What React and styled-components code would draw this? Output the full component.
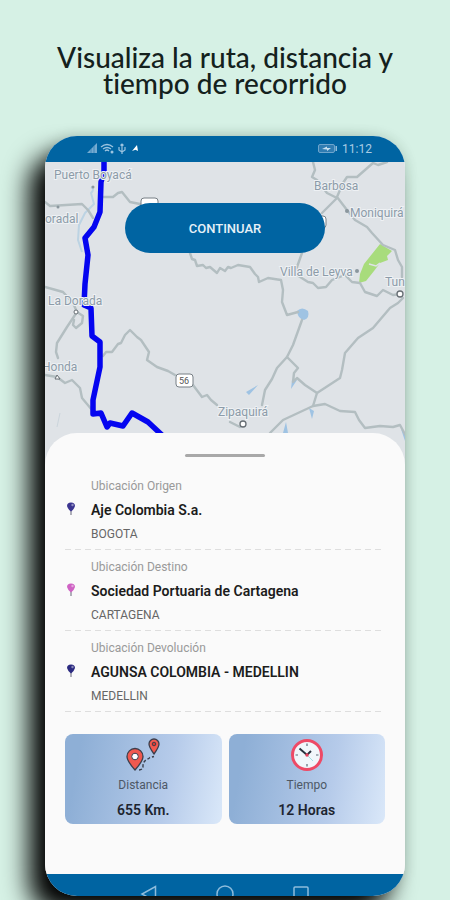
import styled, { createGlobalStyle } from 'styled-components';

const locations = [
  { label: 'Ubicación Origen', name: 'Aje Colombia S.a.', city: 'BOGOTA', color: '#3b3590' },
  {
    label: 'Ubicación Destino',
    name: 'Sociedad Portuaria de Cartagena',
    city: 'CARTAGENA',
    color: '#cf62c4',
  },
  {
    label: 'Ubicación Devolución',
    name: 'AGUNSA COLOMBIA - MEDELLIN',
    city: 'MEDELLIN',
    color: '#2b2a80',
  },
];

const roads = [
  '45,202 50,206 82,204 88,210 93,218',
  '103,197 113,197 118,193 122,192 130,202 140,204',
  '190,253 192,259 195,260 197,266 203,265 206,268 210,267 217,273 220,268 225,271 228,267 231,268 238,265 250,267 255,274 258,277 259,282 268,278 281,280 283,290 282,302 287,315 298,312',
  '45,287 63,292 73,303 77,312 83,316 82,323 76,328 73,325 74,320',
  '77,312 67,327 57,343 56,352 58,358',
  '45,375 57,377 65,383 72,380 80,388 82,398 92,410',
  '103,356 106,352 112,352 118,344 121,343 125,335 130,330 137,337 141,340 145,346 149,352 147,360 157,367 168,371 175,375',
  '193,385 202,397 207,395 211,400 217,405',
  '230,422 240,427',
  '313,162 315,170 312,177 317,180 327,193 337,198 322,213',
  '387,162 378,165 373,163 365,170 357,177 347,177 343,183 337,197 347,210 355,220 367,227 372,233 383,245 395,250 398,260 402,267 402,277',
  '302,253 297,267 297,275 308,282 313,283 318,288 326,287 332,280 345,275 352,282 360,283 365,292 377,296 383,290 393,295 400,294',
  '403,298 398,303 390,308 373,328 358,338 345,353 342,370 340,378 317,393 305,385 297,378 293,382 294,373 298,368 287,357 293,345 302,320',
  '287,357 277,368 272,379 265,390 262,405',
  '317,393 313,406 283,420 270,433',
  '313,406 325,404 340,411 355,412 359,420 365,428 380,426 393,427 400,425 406,436',
];

const places = [
  { name: 'Puerto Boyacá', x: 54, y: 179 },
  { name: 'oradal', x: 45, y: 223 },
  { name: 'La Dorada', x: 48, y: 305 },
  { name: 'Honda', x: 42, y: 371 },
  { name: 'Barbosa', x: 314, y: 190 },
  { name: 'Moniquirá', x: 350, y: 217 },
  { name: 'Villa de Leyva', x: 280, y: 276 },
  { name: 'Tun', x: 385, y: 286 },
  { name: 'Zipaquirá', x: 218, y: 416 },
];

function SignalIcons() {
  return (
    <svg width="52" height="12" viewBox="0 0 52 12" fill="none" stroke="#9cc4e0">
      <path d="M0 10 L10 0 V10 Z" fill="#75abd1" stroke="none" />
      <path d="M4 6 V10 M7 3 V10" stroke="#3f86ba" strokeWidth="1" />
      <path d="M14 4 Q20 -1 26 4 M16 6 Q20 3 24 6 M18 8 Q20 6 22 8" strokeWidth="1.3" />
      <circle cx="25" cy="9" r="1.5" fill="#9cc4e0" stroke="none" />
      <path d="M35 1 V11 M32 4 V7 L35 9 M38 4 V7 L35 9 M33.5 2.5 L35 1 L36.5 2.5" strokeWidth="1.2" />
      <path d="M45 8 L50 2 L51 8 L48.5 6.8 Z" fill="#fff" stroke="none" />
    </svg>
  );
}

function BatteryIcon() {
  return (
    <svg width="20" height="10" viewBox="0 0 20 10">
      <rect x="0.5" y="0.5" width="16" height="8" rx="1.5" fill="#2f7cb2" stroke="#6da5cc" />
      <path d="M4 5 L9 2.5 V4 H13 L9 7 V5.5 Z" fill="#c7dfef" />
      <rect x="17.5" y="2" width="1.5" height="5" fill="#8fbcdb" />
    </svg>
  );
}

function RouteMap() {
  return (
    <MapDrawing viewBox="45 162 360 303" preserveAspectRatio="xMidYMin slice">
      <rect x="45" y="162" width="360" height="303" fill="#dfe3e7" />
      <g fill="none" stroke="#bcd3e3" strokeWidth="2" strokeLinejoin="round">
        <path d="M91 187 Q95 189 91 193 L94 204 L85 213 L79 225 L78 240 L82 252" />
        <path d="M60 413 L57 427" stroke="#cbd5dc" strokeWidth="1" />
      </g>
      <g fill="#9fc3e3">
        <path d="M297 311 Q302 306 308 311 Q310 318 304 320 Q298 319 297 311 Z" />
        <path d="M246 392 L258 385 L249 395 Z M291 389 L292 380 L297 380 Z M283 433 L286 422 L288 433 Z M309 408 L314 411 L312 419 Z M401 429 L406 434 L406 444 Z" />
      </g>
      <path
        d="M380 244 L392 251 L387 256 L388 260 L380 263 L374 271 L366 281 L359 283 L360 274 L364 264 Z"
        fill="#a8dc7c"
      />
      <path d="M369 264 L376 266 L380 263" stroke="#dfe3e7" strokeWidth="1.5" fill="none" />
      <g fill="none" stroke="#b3bec1" strokeWidth="2.4" strokeLinejoin="round" strokeLinecap="round">
        {roads.map((points) => (
          <polyline key={points} points={points} />
        ))}
      </g>
      <g fill="#fff" stroke="#777f85">
        <rect x="141" y="198" width="17" height="12" rx="3" />
        <rect x="176" y="374" width="17" height="13" rx="3" />
        <rect x="318" y="216" width="8" height="12" rx="3" />
      </g>
      <ShieldText x="184" y="384" textAnchor="middle">
        56
      </ShieldText>
      <g fill="#fff" stroke="#666d73" strokeWidth="1.3">
        <circle cx="243" cy="424" r="3" />
        <circle cx="400" cy="294" r="3" />
        <circle cx="76" cy="312" r="2" strokeWidth="1" />
        <path d="M55 379 L57 375 L60 379 Z" strokeWidth="1" />
      </g>
      <g fill="#8b979e">
        <circle cx="347" cy="211" r="2" />
        <circle cx="357" cy="271" r="2" />
        <circle cx="93" cy="187" r="1.5" />
        <circle cx="58" cy="207" r="1.5" />
      </g>
      <polyline
        points="104,160 104,172 101,182 100,212 94,227 85,238 88,255 85,284 84,305 91,308 92,336 100,342 100,367 93,400 93,414 101,413 107,427 110,423 123,426 132,413 148,422 163,436"
        fill="none"
        stroke="#0505f0"
        strokeWidth="5.5"
        strokeLinejoin="round"
      />
      {places.map((place) => (
        <PlaceName key={place.name} x={place.x} y={place.y}>
          {place.name}
        </PlaceName>
      ))}
    </MapDrawing>
  );
}

function PinIcon({ color }) {
  return (
    <svg width="12" height="16" viewBox="0 0 12 16">
      <path d="M6 6 V13" stroke="#8f8f9d" strokeWidth="1.4" />
      <path d="M2 4 Q2 0.5 6 0.5 Q10 0.5 10 4 Q9 7.5 6 9.5 Q3 7.5 2 4 Z" fill={color} />
      <circle cx="7.5" cy="3" r="1.2" fill="#fff" opacity="0.45" />
    </svg>
  );
}

function DistanceIcon() {
  return (
    <svg width="36" height="34" viewBox="0 0 36 34">
      <g fill="#f0594f" stroke="#3b3f4c" strokeWidth="1.3" strokeLinejoin="round">
        <path d="M10 32 Q2 23 2 18.5 A8 8 0 0 1 18 18.5 Q18 23 10 32 Z" />
        <path d="M29 16 Q24 9 24 6 A5 5 0 0 1 34 6 Q34 9 29 16 Z" />
      </g>
      <circle cx="10" cy="18.5" r="3.3" fill="#fff" stroke="#3b3f4c" />
      <circle cx="29" cy="6" r="1.8" fill="#d9372f" stroke="#3b3f4c" />
      <path
        d="M14 32 Q18 32 18 28 Q18 24 21 22 Q23 21 25 19.5 L29 18.5"
        fill="none"
        stroke="#3b3f4c"
        strokeWidth="1.4"
        strokeDasharray="3 2"
      />
    </svg>
  );
}

function ClockIcon() {
  return (
    <svg width="34" height="34" viewBox="0 0 34 34">
      <circle cx="17" cy="17" r="14.5" fill="#f1f7fb" stroke="#ee4a66" strokeWidth="3" />
      <path
        d="M17 5.5 V8 M17 26 V28.5 M5.5 17 H8 M26 17 H28.5"
        stroke="#5c6b78"
        strokeWidth="1.2"
      />
      <path d="M17 17 L23 23" stroke="#9de0e4" strokeWidth="1" />
      <path d="M9.5 10.5 L17 17 L21 13" fill="none" stroke="#28333f" strokeWidth="2" />
      <circle cx="17" cy="17" r="1.7" fill="#e5405c" />
    </svg>
  );
}

function App() {
  return (
    <Page>
      <GlobalStyle />
      <Title>
        Visualiza la ruta, distancia y<br />
        tiempo de recorrido
      </Title>

      <Phone>
        <StatusBar>
          <SignalIcons />
          <Clock>
            <BatteryIcon />
            11:12
          </Clock>
        </StatusBar>

        <MapWrap>
          <RouteMap />
          <ContinueButton type="button">CONTINUAR</ContinueButton>
        </MapWrap>

        <Sheet>
          <Handle />
          <LocationList>
            {locations.map((item) => (
              <LocationItem key={item.label}>
                <PinIcon color={item.color} />
                <div>
                  <Label>{item.label}</Label>
                  <Name>{item.name}</Name>
                  <City>{item.city}</City>
                </div>
              </LocationItem>
            ))}
          </LocationList>

          <Summary>
            <SummaryCard>
              <DistanceIcon />
              <SummaryLabel>Distancia</SummaryLabel>
              <SummaryValue>655 Km.</SummaryValue>
            </SummaryCard>
            <SummaryCard>
              <ClockIcon />
              <SummaryLabel>Tiempo</SummaryLabel>
              <SummaryValue>12 Horas</SummaryValue>
            </SummaryCard>
          </Summary>
        </Sheet>

        <NavBar>
          <NavButton type="button" aria-label="Atrás">
            <svg width="18" height="18" viewBox="0 0 18 18">
              <path d="M15.5 1.5 V16.5 L2 9 Z" />
            </svg>
          </NavButton>
          <NavButton type="button" aria-label="Inicio">
            <svg width="18" height="18" viewBox="0 0 18 18">
              <circle cx="9" cy="9" r="8" />
            </svg>
          </NavButton>
          <NavButton type="button" aria-label="Recientes">
            <svg width="18" height="18" viewBox="0 0 18 18">
              <rect x="2" y="2" width="14" height="14" rx="1" />
            </svg>
          </NavButton>
        </NavBar>
      </Phone>
    </Page>
  );
}

export default App;

const GlobalStyle = createGlobalStyle`
  * {
    box-sizing: border-box;
  }

  body {
    margin: 0;
    background: #d6f1e5;
    font-family: Roboto, 'Liberation Sans', sans-serif;
  }
`;

const Page = styled.div`
  min-height: 100vh;
  padding: 44px 45px 4px;

  display: flex;
  flex-flow: column;
`;

const Title = styled.h1`
  margin: 0 -20px 40px;

  color: #14211d;
  font-family: Lato, sans-serif;
  font-size: 28px;
  font-weight: 500;
  font-variant-ligatures: none;
  line-height: 26px;
  text-align: center;
`;

const Phone = styled.main`
  flex: 1;
  overflow: hidden;
  border-radius: 32px;
  background: #fafafa;
  box-shadow:
    -16px 18px 26px #000,
    0 0 14px rgba(0, 40, 20, 0.14);

  display: flex;
  flex-flow: column;
`;

const StatusBar = styled.div`
  padding: 0 33px 0 42px;
  background: #0064a2;

  display: flex;
  align-items: center;
  justify-content: space-between;
`;

const Clock = styled.div`
  color: #a9cce4;
  font-size: 12px;
  line-height: 26px;

  display: flex;
  align-items: center;
  gap: 4px;
`;

const MapWrap = styled.div`
  position: relative;
  height: 303px;
`;

const MapDrawing = styled.svg`
  display: block;
  width: 100%;
  height: 100%;
`;

const PlaceName = styled.text`
  fill: #8c9ba8;
  stroke: #eef1f4;
  stroke-width: 2px;
  paint-order: stroke;
  font-size: 12px;
`;

const ShieldText = styled.text`
  fill: #555;
  font-size: 9px;
`;

const ContinueButton = styled.button`
  position: absolute;
  top: 41px;
  left: 50%;
  width: 200px;
  height: 50px;
  margin-left: -100px;
  border: none;
  border-radius: 25px;

  background: #0064a2;
  color: #e6f1f8;
  font-family: inherit;
  font-size: 13px;
  font-weight: 500;
  cursor: pointer;
`;

const Sheet = styled.section`
  position: relative;
  flex: 1;
  margin-top: -32px;
  padding: 21px 20px 50px;
  border-radius: 32px 32px 0 0;
  background: #fafafa;
`;

const Handle = styled.div`
  width: 80px;
  height: 3px;
  margin: 0 auto 12px;
  border-radius: 2px;
  background: #a8a8a8;
`;

const LocationList = styled.ul`
  margin: 0;
  padding: 0;
  list-style: none;
`;

const LocationItem = styled.li`
  padding: 5px 0 4px;
  background: repeating-linear-gradient(to right, #dedede 0 6px, transparent 6px 10px) left bottom /
    calc(100% - 4px) 1px no-repeat;

  display: grid;
  grid-template-columns: 26px 1fr;
  align-items: center;
`;

const Label = styled.p`
  margin: 0;
  color: #999;
  font-size: 12px;
  line-height: 24px;
`;

const Name = styled.p`
  margin: 0;
  color: #1c1c1c;
  font-size: 14px;
  font-weight: 600;
  line-height: 24px;
`;

const City = styled.p`
  margin: 0;
  color: #666;
  font-size: 12px;
  line-height: 24px;
`;

const Summary = styled.div`
  margin-top: 22px;

  display: grid;
  grid-template-columns: 1fr 1fr;
  gap: 7px;
`;

const SummaryCard = styled.div`
  padding: 4px 0 2px;
  border-radius: 8px;
  background: linear-gradient(100deg, #8eafd6 10%, #b6cbea 65%, #dae8f9 100%);

  display: flex;
  flex-flow: column;
  align-items: center;
`;

const SummaryLabel = styled.span`
  color: #4d5866;
  font-size: 12px;
  line-height: 26px;
`;

const SummaryValue = styled.strong`
  color: #1d2530;
  font-size: 14px;
  font-weight: 600;
  line-height: 24px;
`;

const NavBar = styled.nav`
  height: 22px;
  padding-top: 11px;
  overflow: hidden;
  background: #0064a2;

  display: flex;
  justify-content: center;
  gap: 58px;
`;

const NavButton = styled.button`
  height: 18px;
  padding: 0;
  border: none;
  background: none;
  cursor: pointer;

  svg {
    display: block;
    fill: none;
    stroke: #8dbcdc;
    stroke-width: 1.5;
  }
`;
